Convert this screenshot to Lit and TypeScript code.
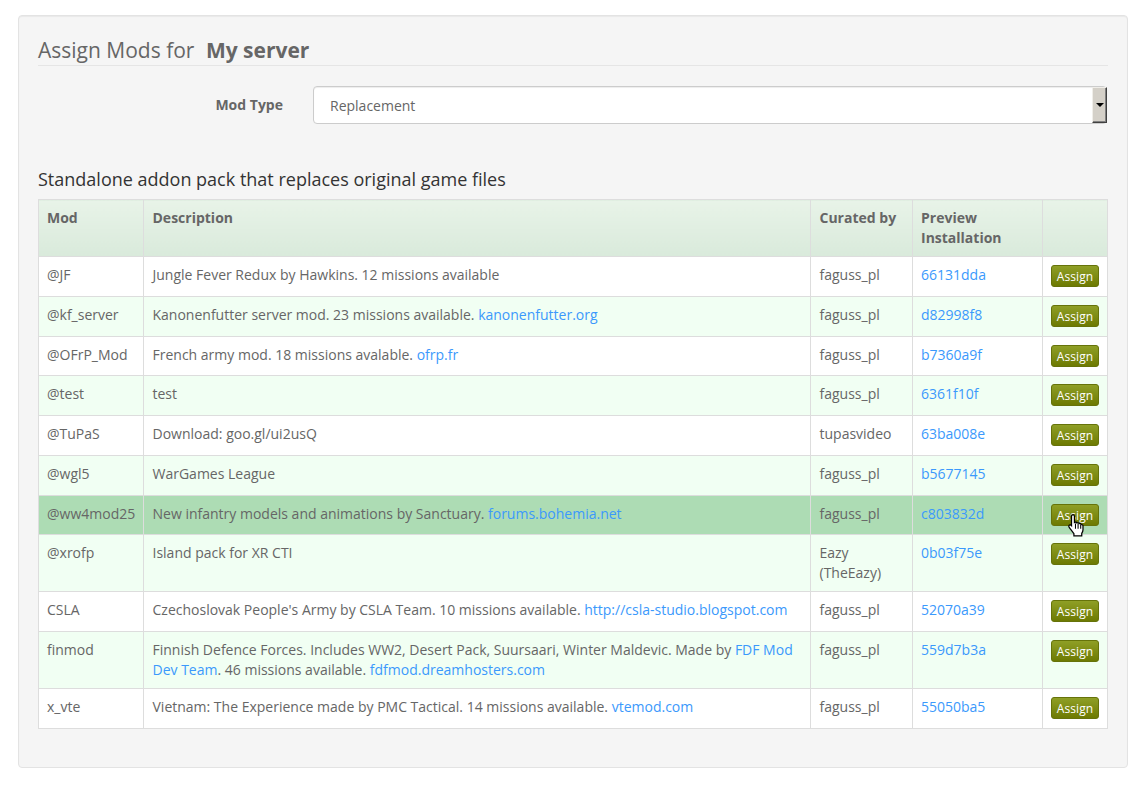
import { LitElement, html, css } from "lit";
import { customElement } from "lit/decorators.js";

type Row = { mod: string; desc: unknown; by: unknown; hash: string; cls?: string };
const a = (t: string) => html`<a>${t}</a>`;
const rows: Row[] = [
  { mod: "@JF", desc: "Jungle Fever Redux by Hawkins. 12 missions available", by: "faguss_pl", hash: "66131dda" },
  { mod: "@kf_server", desc: html`Kanonenfutter server mod. 23 missions available. ${a("kanonenfutter.org")}`, by: "faguss_pl", hash: "d82998f8" },
  { mod: "@OFrP_Mod", desc: html`French army mod. 18 missions avalable. ${a("ofrp.fr")}`, by: "faguss_pl", hash: "b7360a9f" },
  { mod: "@test", desc: "test", by: "faguss_pl", hash: "6361f10f" },
  { mod: "@TuPaS", desc: "Download: goo.gl/ui2usQ", by: "tupasvideo", hash: "63ba008e" },
  { mod: "@wgl5", desc: "WarGames League", by: "faguss_pl", hash: "b5677145" },
  { mod: "@ww4mod25", desc: html`New infantry models and animations by Sanctuary. ${a("forums.bohemia.net")}`, by: "faguss_pl", hash: "c803832d", cls: "hover" },
  { mod: "@xrofp", desc: "Island pack for XR CTI", by: html`Eazy<br />(TheEazy)`, hash: "0b03f75e" },
  { mod: "CSLA", desc: html`Czechoslovak People's Army by CSLA Team. 10 missions available. ${a("http://csla-studio.blogspot.com")}`, by: "faguss_pl", hash: "52070a39" },
  { mod: "finmod", desc: html`Finnish Defence Forces. Includes WW2, Desert Pack, Suursaari, Winter Maldevic. Made by ${a("FDF Mod Dev Team")}. 46 missions available. ${a("fdfmod.dreamhosters.com")}`, by: "faguss_pl", hash: "559d7b3a" },
  { mod: "x_vte", desc: html`Vietnam: The Experience made by PMC Tactical. 14 missions available. ${a("vtemod.com")}`, by: "faguss_pl", hash: "55050ba5" },
];

@customElement("app-root")
export class AppRoot extends LitElement {
  static styles = css`
    :host { display: block; font-family: "Open Sans", sans-serif; font-size: 14px; line-height: 20px; color: #666; background: #fff; min-height: 805px; box-sizing: border-box; padding: 15px 18px 0; }
    * { box-sizing: border-box; }
    .well { position: relative; width: 1110px; height: 753px; padding: 19px; background: #f5f5f5; border: 1px solid #e3e3e3; border-radius: 4px; box-shadow: inset 0 1px 1px rgba(0,0,0,.05); }
    h3 { margin: 0; font-size: 21px; font-weight: 400; line-height: 30px; height: 31px; border-bottom: 1px solid #e5e5e5; color: #666; }
    h3 b { font-weight: 700; margin-left: 6px; }
    .form { display: flex; align-items: center; margin-top: 20px; height: 38px; }
    .form label { width: 245px; text-align: right; font-weight: 700; flex: none; }
    .select { margin-left: 30px; width: 794px; height: 38px; display: flex; background: #fff; border: 1px solid #ccc; border-radius: 4px; padding-left: 16px; align-items: center; color: #666; box-shadow: inset 0 1px 1px rgba(0,0,0,.075); }
    .select span { flex: 1; padding-top: 1px; }
    .arrow { width: 15px; height: 36px; margin-right: -1px; background: #d4d0c8; border-style: solid; border-width: 1px; border-color: #f0eee9 #404040 #404040 #f0eee9; box-shadow: inset -1px -1px 0 #808080; display: flex; align-items: center; justify-content: center; }
    .arrow i { display: block; width: 0; height: 0; border: 4px solid transparent; border-top: 4px solid #000; border-bottom: 0; }
    h4 { margin: 43px 0 0; font-size: 18px; line-height: 20px; font-weight: 400; color: #333; height: 32.2px; padding-top: 2px; }
    table { width: 1070px; table-layout: fixed; border-collapse: collapse; border: 1px solid #ddd; background: #fff; }
    .c1 { width: 105px; } .c2 { width: 667px; } .c3 { width: 102px; } .c4 { width: 130px; } .c5 { width: 65px; }
    th, td { border: 1px solid #ddd; padding: 8px; vertical-align: top; text-align: left; }
    th:nth-child(2), td:nth-child(2), th:nth-child(3), td:nth-child(3) { padding-left: 8.5px; }
    th { font-weight: 700; height: 57px; background: linear-gradient(#e8f3e8, #d9eadb); }
    tbody tr:nth-child(even) td { background: #f1fff3; }
    tbody tr.hover td { background: #addcb4; }
    a { color: #3b99fc; text-decoration: none; }
    .btn { display: block; width: 48px; height: 22px; font-size: 12px; line-height: 22px; letter-spacing: 0.1px; text-align: center; color: #fff; border: 1px solid #66730a; border-radius: 3px; background: linear-gradient(#8f9f26, #6d7a02); margin-bottom: 0.72px; }
    .hand { position: absolute; left: 1048px; top: 497px; width: 18px; height: 24px; pointer-events: none; }
  `;

  render() {
    return html`<div class="well">
      <h3>Assign Mods for <b>My server</b></h3>
      <div class="form">
        <label>Mod Type</label>
        <div class="select"><span>Replacement</span><div class="arrow"><i></i></div></div>
      </div>
      <h4>Standalone addon pack that replaces original game files</h4>
      <table>
        <colgroup><col class="c1" /><col class="c2" /><col class="c3" /><col class="c4" /><col class="c5" /></colgroup>
        <thead><tr><th>Mod</th><th>Description</th><th>Curated by</th><th>Preview Installation</th><th></th></tr></thead>
        <tbody>
          ${rows.map((r) => html`<tr class=${r.cls ?? ""}>
            <td>${r.mod}</td><td>${r.desc}</td><td>${r.by}</td><td><a>${r.hash}</a></td><td><span class="btn">Assign</span></td>
          </tr>`)}
        </tbody>
      </table>
      <svg class="hand" viewBox="0 0 17 23">
        <path d="M5.500 1.500c1 0 1.500.7 1.500 1.700v6l1-.4c.8-.2 1.300.2 1.500.8.8-.5 1.700-.2 2 .6.9-.4 1.800 0 2 .9.8-.2 1.700.3 1.700 1.300v3.600c0 1.500-.6 2.600-1.200 3.500v2.500H6.500v-2.200c-1-1.300-3-4-4.500-6-.6-.8-.5-1.700.2-2.200.7-.4 1.400-.2 2 .5V3.200c0-1 .7-1.700 1.800-1.700z" fill="#fff" stroke="#000" stroke-width="1.200" />
        <path d="M8 10v5M10.500 10.500V15M13 11v4" stroke="#000" stroke-width="1" fill="none" />
      </svg>
    </div>`;
  }
}
